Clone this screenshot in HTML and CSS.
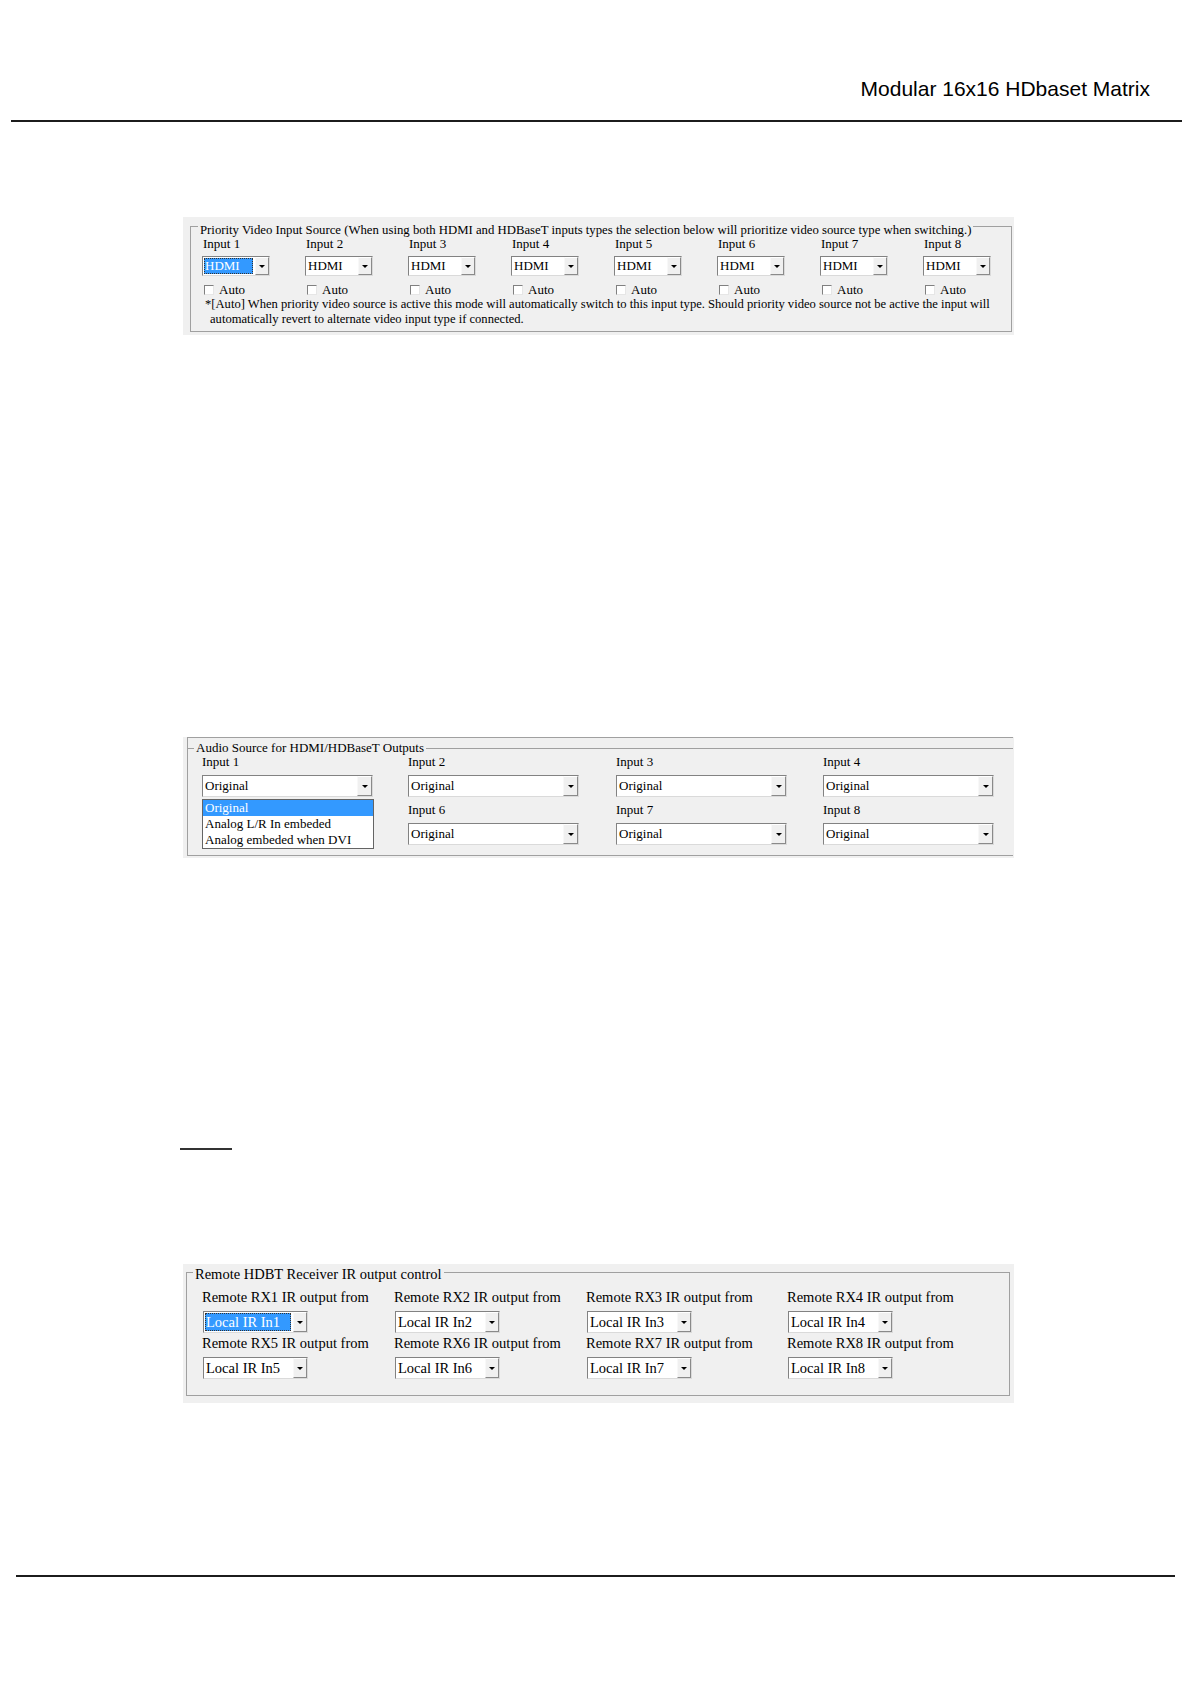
FILE: index.html
```html
<!DOCTYPE html>
<html lang="en">
<head>
    <meta charset="UTF-8">
<title>Modular 16x16 HDbaset Matrix</title>
<link rel="stylesheet" href="styles.css">
</head>
<body>
<div class="page">
<div class="page-head">Modular 16x16 HDbaset Matrix</div>
<div class="rule"></div>

<div class="panel video">
<div class="group">
<div class="group-title">Priority Video Input Source (When using both HDMI and HDBaseT inputs types the selection below will prioritize video source type when switching.)</div>
<div class="video-cols">
<div class="col">
<div class="label">Input 1</div>
<div class="combo"><span class="combo-value is-selected">HDMI</span><span class="combo-btn"></span></div>
<div class="auto"><span class="checkbox"></span>Auto</div>
</div>
<div class="col">
<div class="label">Input 2</div>
<div class="combo"><span class="combo-value">HDMI</span><span class="combo-btn"></span></div>
<div class="auto"><span class="checkbox"></span>Auto</div>
</div>
<div class="col">
<div class="label">Input 3</div>
<div class="combo"><span class="combo-value">HDMI</span><span class="combo-btn"></span></div>
<div class="auto"><span class="checkbox"></span>Auto</div>
</div>
<div class="col">
<div class="label">Input 4</div>
<div class="combo"><span class="combo-value">HDMI</span><span class="combo-btn"></span></div>
<div class="auto"><span class="checkbox"></span>Auto</div>
</div>
<div class="col">
<div class="label">Input 5</div>
<div class="combo"><span class="combo-value">HDMI</span><span class="combo-btn"></span></div>
<div class="auto"><span class="checkbox"></span>Auto</div>
</div>
<div class="col">
<div class="label">Input 6</div>
<div class="combo"><span class="combo-value">HDMI</span><span class="combo-btn"></span></div>
<div class="auto"><span class="checkbox"></span>Auto</div>
</div>
<div class="col">
<div class="label">Input 7</div>
<div class="combo"><span class="combo-value">HDMI</span><span class="combo-btn"></span></div>
<div class="auto"><span class="checkbox"></span>Auto</div>
</div>
<div class="col">
<div class="label">Input 8</div>
<div class="combo"><span class="combo-value">HDMI</span><span class="combo-btn"></span></div>
<div class="auto"><span class="checkbox"></span>Auto</div>
</div>
</div>
<div class="note">*[Auto] When priority video source is active this mode will automatically switch to this input type. Should priority video source not be active the input will<br>automatically revert to alternate video input type if connected.</div>
</div>
</div>

<div class="panel audio">
<div class="audio-frame">
<div class="group">
<div class="group-title">Audio Source for HDMI/HDBaseT Outputs</div>
<div class="audio-cols">
<div class="cell">
<div class="label">Input 1</div>
<div class="combo"><span class="combo-value">Original</span><span class="combo-btn"></span></div>
<div class="dropdown">
<div class="dropdown-item is-active">Original</div>
<div class="dropdown-item">Analog L/R In embeded</div>
<div class="dropdown-item">Analog embeded when DVI</div>
</div>
</div>
<div class="cell">
<div class="label">Input 2</div>
<div class="combo"><span class="combo-value">Original</span><span class="combo-btn"></span></div>
</div>
<div class="cell">
<div class="label">Input 3</div>
<div class="combo"><span class="combo-value">Original</span><span class="combo-btn"></span></div>
</div>
<div class="cell">
<div class="label">Input 4</div>
<div class="combo"><span class="combo-value">Original</span><span class="combo-btn"></span></div>
</div>
<div class="cell"></div>
<div class="cell">
<div class="label">Input 6</div>
<div class="combo"><span class="combo-value">Original</span><span class="combo-btn"></span></div>
</div>
<div class="cell">
<div class="label">Input 7</div>
<div class="combo"><span class="combo-value">Original</span><span class="combo-btn"></span></div>
</div>
<div class="cell">
<div class="label">Input 8</div>
<div class="combo"><span class="combo-value">Original</span><span class="combo-btn"></span></div>
</div>
</div>
</div>
</div>
</div>

<div class="short-rule"></div>

<div class="panel ir">
<div class="group">
<div class="group-title">Remote HDBT Receiver IR output control</div>
<div class="ir-cols">
<div class="cell">
<div class="label">Remote RX1 IR output from</div>
<div class="combo"><span class="combo-value is-selected">Local IR In1</span><span class="combo-btn"></span></div>
</div>
<div class="cell">
<div class="label">Remote RX2 IR output from</div>
<div class="combo"><span class="combo-value">Local IR In2</span><span class="combo-btn"></span></div>
</div>
<div class="cell">
<div class="label">Remote RX3 IR output from</div>
<div class="combo"><span class="combo-value">Local IR In3</span><span class="combo-btn"></span></div>
</div>
<div class="cell">
<div class="label">Remote RX4 IR output from</div>
<div class="combo"><span class="combo-value">Local IR In4</span><span class="combo-btn"></span></div>
</div>
<div class="cell">
<div class="label">Remote RX5 IR output from</div>
<div class="combo"><span class="combo-value">Local IR In5</span><span class="combo-btn"></span></div>
</div>
<div class="cell">
<div class="label">Remote RX6 IR output from</div>
<div class="combo"><span class="combo-value">Local IR In6</span><span class="combo-btn"></span></div>
</div>
<div class="cell">
<div class="label">Remote RX7 IR output from</div>
<div class="combo"><span class="combo-value">Local IR In7</span><span class="combo-btn"></span></div>
</div>
<div class="cell">
<div class="label">Remote RX8 IR output from</div>
<div class="combo"><span class="combo-value">Local IR In8</span><span class="combo-btn"></span></div>
</div>
</div>
</div>
</div>

<div class="rule foot"></div>
</div>
</body>
</html>
```

FILE: styles.css
```css
body {
margin: 0;
background: #fff;
color: #000;
font-family: "Liberation Serif", "Times New Roman", serif;
}
.page {
width: 1191px;
}
.page-head {
padding: 77px 41px 0 0;
text-align: right;
font: 21px/24px "Liberation Sans", Arial, sans-serif;
}
.rule {
margin: 19px 9px 0 11px;
border-top: 2px solid #1c1c1c;
}
.rule.foot {
margin: 172px 16px 0 16px;
}
.short-rule {
width: 52px;
margin: 290px 0 0 180px;
border-top: 2px solid #333;
}

/* panels */
.panel {
width: 831px;
margin-left: 183px;
box-sizing: border-box;
background: #f0f0f0;
}
.group {
border: 1px solid #a0a0a0;
box-sizing: border-box;
}
.group-title {
width: fit-content;
padding: 0 2px;
background: #f0f0f0;
white-space: nowrap;
}
.label {
white-space: nowrap;
}

/* combo box */
.combo {
display: flex;
box-sizing: border-box;
background: #fff;
border: 1px solid;
border-color: #828282 #dadada #dadada #828282;
}
.combo-value {
flex: 1;
padding-left: 2px;
white-space: nowrap;
overflow: hidden;
}
.combo-value.is-selected {
margin: 1px 2px 1px 1px;
padding-left: 1px;
background: #3399ff;
color: #fff;
outline: 1px dotted #333;
outline-offset: -1px;
}
.combo-btn {
display: flex;
align-items: center;
justify-content: center;
box-sizing: border-box;
background: #f0f0f0;
border: 1px solid;
border-color: #fff #8a8a8a #8a8a8a #f8f8f8;
}
.combo-btn::after {
content: "";
border-left: 3px solid transparent;
border-right: 3px solid transparent;
border-top: 3px solid #000;
}

/* priority video */
.video {
margin-top: 95px;
padding: 9px 2px 3px 7px;
}
.video .group {
height: 106px;
}
.video .group-title {
margin: -4px 0 0 7px;
font-size: 12.75px;
line-height: 14px;
}
.video-cols {
display: grid;
grid-template-columns: repeat(8, 103px);
margin-left: 12px;
font-size: 13px;
line-height: 14px;
}
.video .combo {
width: 68px;
height: 20px;
margin: 5px 0 0 -1px;
line-height: 18px;
}
.video .combo-value.is-selected {
line-height: 16px;
}
.video .combo-btn {
width: 14px;
}
.auto {
display: flex;
align-items: center;
gap: 5px;
margin: 8px 0 0 1px;
line-height: 12px;
}
.checkbox {
width: 8px;
height: 8px;
background: #fff;
border: 1px solid;
border-color: #808080 #e6e6e6 #e6e6e6 #808080;
}
.note {
margin: 1px 0 0 14px;
padding-left: 5px;
text-indent: -5px;
font-size: 12.6px;
line-height: 15px;
white-space: nowrap;
}

/* audio source */
.audio {
margin-top: 402px;
padding: 0 1px 2px 4px;
}
.audio-frame {
padding-top: 10px;
border-top: 1px solid #a0a0a0;
border-left: 1px solid #a0a0a0;
}
.audio .group {
border-width: 1px 0;
padding-bottom: 10px;
}
.audio .group-title {
margin: -8px 0 0 6px;
font-size: 13px;
line-height: 14px;
}
.audio-cols {
display: grid;
grid-template-columns: 206px 208px 207px 180px;
grid-template-rows: 42px 42px;
row-gap: 6px;
margin-left: 14px;
font-size: 13px;
line-height: 14px;
}
.cell {
position: relative;
}
.audio .combo {
width: 171px;
height: 22px;
margin-top: 6px;
line-height: 20px;
}
.audio .combo-btn {
width: 15px;
}
.dropdown {
position: absolute;
top: calc(100% + 2px);
left: 0;
z-index: 2;
width: 172px;
box-sizing: border-box;
background: #fff;
border: 1px solid #646464;
}
.dropdown-item {
padding-left: 2px;
line-height: 16px;
white-space: nowrap;
}
.dropdown-item.is-active {
background: #3399ff;
color: #fff;
}

/* ir control */
.ir {
margin-top: 114px;
padding: 8px 4px 7px 3px;
}
.ir .group {
height: 124px;
}
.ir .group-title {
margin: -7px 0 0 6px;
font-size: 14.5px;
line-height: 16px;
}
.ir-cols {
display: grid;
grid-template-columns: 192px 192px 201px 200px;
row-gap: 2px;
margin: 7px 0 0 15px;
font-size: 14.5px;
line-height: 16px;
}
.ir .combo {
width: 105px;
height: 22px;
margin: 6px 0 0 1px;
line-height: 20px;
}
.ir .combo-value.is-selected {
line-height: 18px;
}
.ir .combo-btn {
width: 14px;
}
```
